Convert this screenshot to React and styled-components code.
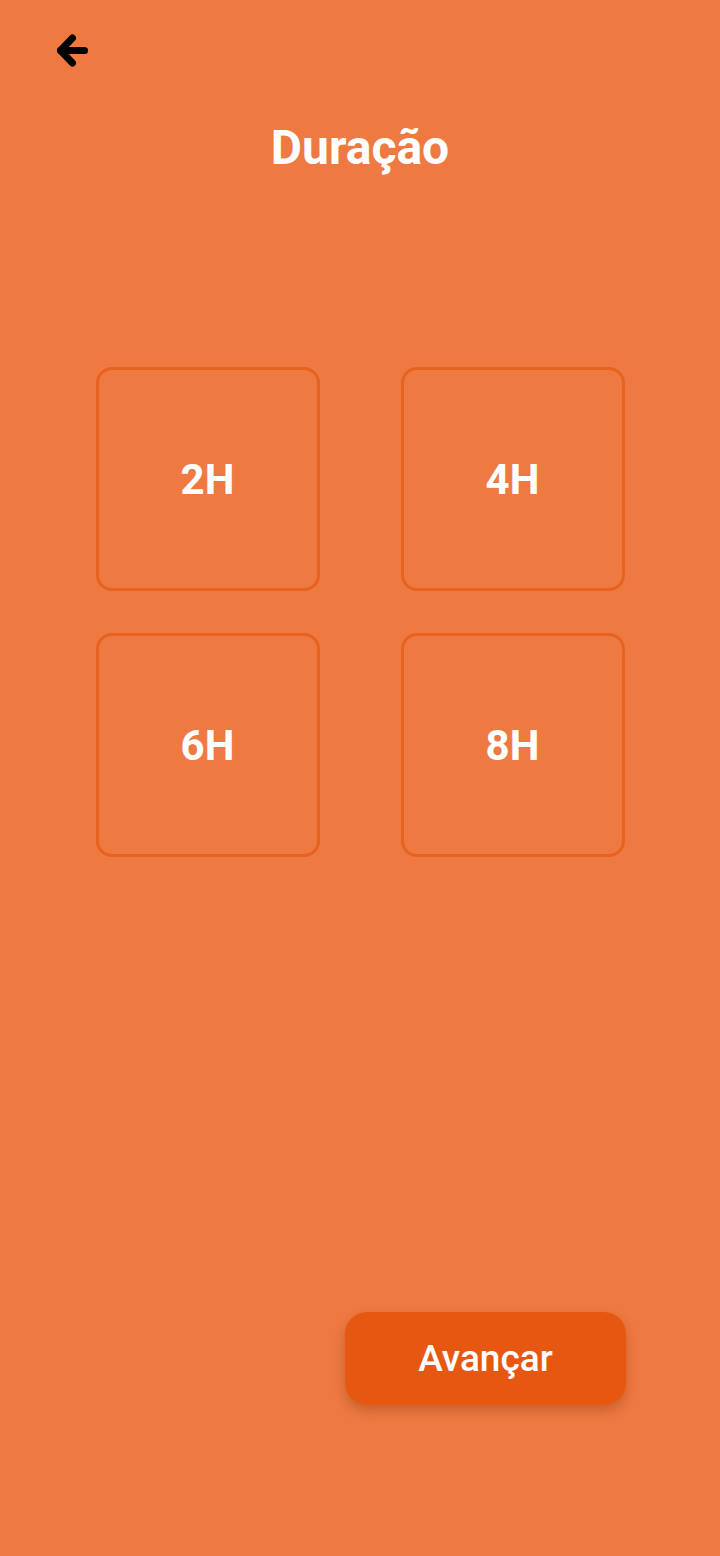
import React, { useState } from 'react'
import styled, { createGlobalStyle } from 'styled-components'

const GlobalStyle = createGlobalStyle`
  html, body {
    margin: 0;
    padding: 0;
    background: #ee7941;
  }
  * {
    box-sizing: border-box;
  }
`

const Screen = styled.div`
  min-height: 1556px;
  background: #ee7941;
  font-family: Roboto, 'Noto Sans', sans-serif;
  color: #fff;
  display: flex;
  flex-direction: column;
`

const TopBar = styled.div`
  height: 108px;
  padding: 34px 0 0 54px;
`

const BackButton = styled.button`
  width: 36px;
  height: 36px;
  padding: 0;
  border: none;
  background: none;
  cursor: pointer;
  display: flex;
  align-items: center;
  justify-content: center;
`

const Title = styled.h1`
  margin: 0;
  font-size: 48px;
  font-weight: 700;
  line-height: 80px;
  text-align: center;
`

const Options = styled.div`
  display: grid;
  grid-template-columns: repeat(2, 224px);
  gap: 42px 81px;
  justify-content: center;
  margin-top: 179px;
`

const Option = styled.button`
  width: 224px;
  height: 224px;
  border: 3px solid ${(p) => (p.$active ? '#fff' : '#e8621f')};
  border-radius: 16px;
  background: transparent;
  color: #fff;
  font-family: Roboto, 'Noto Sans', sans-serif;
  font-size: 42px;
  font-weight: 700;
  cursor: pointer;
  display: flex;
  align-items: center;
  justify-content: center;
`

const Footer = styled.div`
  display: flex;
  justify-content: flex-end;
  padding: 0 94px 0 0;
  margin-top: 455px;
`

const NextButton = styled.button`
  width: 281px;
  height: 93px;
  border: none;
  border-radius: 22px;
  background: #e65812;
  color: #fff;
  font-family: Roboto, 'Noto Sans', sans-serif;
  font-size: 37px;
  font-weight: 500;
  box-shadow: 0 6px 12px rgba(120, 50, 10, 0.32);
  cursor: pointer;
`

const BackArrow = () => (
  <svg width="36" height="36" viewBox="0 0 36 36">
    <g
      fill="none"
      stroke="#000"
      strokeWidth="7"
      strokeLinecap="round"
      strokeLinejoin="round"
    >
      <path d="M6.5 16.5 H30.5" />
      <path d="M18.5 4 L6.5 16.5 L18.5 29" />
    </g>
  </svg>
)

const durations = ['2H', '4H', '6H', '8H']

const App = () => {
  const [selected, setSelected] = useState(null)

  return (
    <>
      <GlobalStyle />
      <Screen>
        <TopBar>
          <BackButton aria-label="Voltar">
            <BackArrow />
          </BackButton>
        </TopBar>
        <Title>Duração</Title>
        <Options>
          {durations.map((d) => (
            <Option
              key={d}
              $active={selected === d}
              onClick={() => setSelected(d)}
            >
              {d}
            </Option>
          ))}
        </Options>
        <Footer>
          <NextButton>Avançar</NextButton>
        </Footer>
      </Screen>
    </>
  )
}

export default App
